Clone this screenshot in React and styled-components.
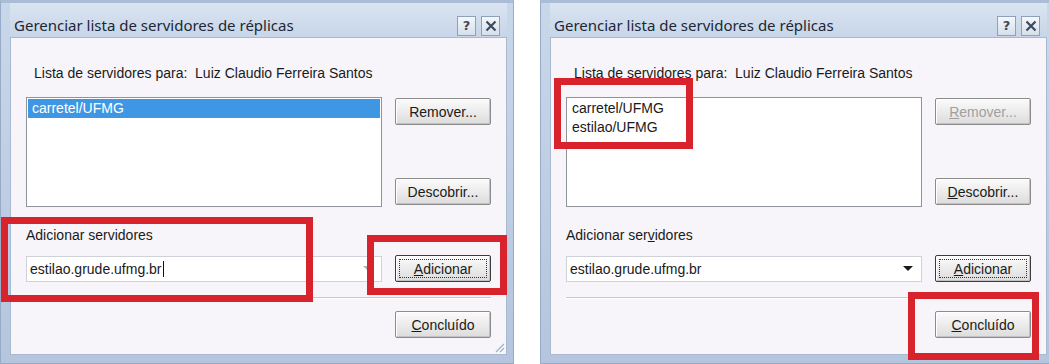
import React from "react";
import styled, { createGlobalStyle } from "styled-components";

const GlobalStyle = createGlobalStyle`
  html, body {
    margin: 0;
    padding: 0;
    background: #ffffff;
  }
`;

const dialogs = [
  {
    id: "before",
    items: ["carretel/UFMG"],
    selected: 0,
    accelerators: false,
    dimRemove: false,
    fadedArrow: true,
    caret: true,
    grip: true,
    marks: [
      { left: 0, top: 214, width: 312, height: 85 },
      { left: 366, top: 232, width: 140, height: 60 },
    ],
  },
  {
    id: "after",
    items: ["carretel/UFMG", "estilao/UFMG"],
    selected: -1,
    accelerators: true,
    dimRemove: true,
    fadedArrow: false,
    caret: false,
    grip: false,
    marks: [
      { left: 13, top: 75, width: 139, height: 71 },
      { left: 367, top: 289, width: 131, height: 68 },
    ],
  },
];

const Key = ({ on, children }) => (on ? <u>{children}</u> : children);

const Dialog = ({ d }) => (
  <Window>
    <TitleBar>
      <Title>Gerenciar lista de servidores de réplicas</Title>
      <Caption>
        <CaptionButton>?</CaptionButton>
        <CaptionButton>
          <svg width="12" height="12" viewBox="0 0 12 12">
            <path d="M1.5 1.5 L10.5 10.5 M10.5 1.5 L1.5 10.5" stroke="#3b4a5e" strokeWidth="2.2" />
          </svg>
        </CaptionButton>
      </Caption>
    </TitleBar>
    <Client>
      <Label>Lista de servidores para:&nbsp; Luiz Claudio Ferreira Santos</Label>
      <ListRow>
        <ListBox>
          {d.items.map((item, i) => (
            <ListItem key={item} $selected={i === d.selected}>
              {item}
            </ListItem>
          ))}
        </ListBox>
        <ButtonColumn>
          <Button disabled={d.dimRemove}>
            <Face>
              <Key on={d.accelerators}>R</Key>emover...
            </Face>
          </Button>
          <Button>
            <Face>
              <Key on={d.accelerators}>D</Key>escobrir...
            </Face>
          </Button>
        </ButtonColumn>
      </ListRow>
      <AddLabel>
        Adicionar ser<Key on={d.accelerators}>v</Key>idores
      </AddLabel>
      <ComboRow>
        <Combo>
          <ComboText>
            estilao.grude.ufmg.br
            {d.caret && <Caret />}
          </ComboText>
          <Arrow $faded={d.fadedArrow} />
        </Combo>
        <Button $default>
          <Face $focus>
            <u>A</u>dicionar
          </Face>
        </Button>
      </ComboRow>
      <Separator />
      <Footer>
        <Button>
          <Face>
            <u>C</u>oncluído
          </Face>
        </Button>
      </Footer>
      {d.grip && (
        <Grip width="12" height="12" viewBox="0 0 12 12">
          <path d="M11 3 L3 11 M11 7 L7 11" stroke="#9fb0c8" strokeWidth="1.2" />
          <path d="M12 4 L4 12 M12 8 L8 12" stroke="#ffffff" strokeWidth="1" />
        </Grip>
      )}
    </Client>
    {d.marks.map((m, i) => (
      <Mark key={i} style={{ left: m.left, top: m.top, width: m.width, height: m.height }} />
    ))}
  </Window>
);

export default function App() {
  return (
    <>
      <GlobalStyle />
      <Page>
        {dialogs.map((d) => (
          <Dialog key={d.id} d={d} />
        ))}
      </Page>
    </>
  );
}

const Page = styled.div`
  display: flex;
  gap: 26px;
  width: 1049px;
  height: 364px;
  overflow: hidden;
`;

const Window = styled.div`
  position: relative;
  flex: 0 0 514px;
  height: 364px;
  box-sizing: border-box;
  display: flex;
  flex-direction: column;
  padding: 0 6px 8px 9px;
  background: linear-gradient(to bottom, #c9d7ea, #b4c5dd);
  border: 1px solid #98abc6;
  border-top: 3px solid #aabcd6;
`;

const TitleBar = styled.div`
  height: 34px;
  display: flex;
  align-items: center;
  justify-content: space-between;
  padding: 0 7px 0 4px;
  background: linear-gradient(to bottom, #dbe5f1, #c6d5e8);
`;

const Title = styled.span`
  font-family: "Noto Sans", sans-serif;
  font-size: 15px;
  color: #1d2636;
  padding-top: 9px;
`;

const Caption = styled.div`
  display: flex;
  gap: 5px;
  padding-top: 11px;
`;

const CaptionButton = styled.div`
  width: 19px;
  height: 20px;
  display: flex;
  align-items: center;
  justify-content: center;
  box-sizing: border-box;
  border: 1px solid #8fa1ba;
  background: linear-gradient(to bottom, #f4f7fb, #d6dfea);
  font-family: "DejaVu Sans", sans-serif;
  font-weight: bold;
  font-size: 13px;
  color: #3b4a5e;
`;

const Client = styled.div`
  position: relative;
  flex: 1;
  display: flex;
  flex-direction: column;
  padding: 27px 0 0 15px;
  background: #f7f5f9;
  border: 1px solid #a9b9d0;
  font-family: "Liberation Sans", Arial, sans-serif;
  font-size: 14px;
  color: #1a1a1a;
`;

const Label = styled.div`
  line-height: 16px;
  padding-left: 8px;
`;

const ListRow = styled.div`
  display: flex;
  gap: 13px;
  margin-top: 16px;
`;

const ListBox = styled.div`
  width: 356px;
  height: 110px;
  box-sizing: border-box;
  padding: 1px;
  background: #ffffff;
  border: 1px solid #8e939c;
`;

const ListItem = styled.div`
  height: 19px;
  line-height: 19px;
  padding-left: 4px;
  color: ${(p) => (p.$selected ? "#ffffff" : "#1a1a1a")};
  background: ${(p) => (p.$selected ? "#3f97e4" : "transparent")};
`;

const ButtonColumn = styled.div`
  display: flex;
  flex-direction: column;
  justify-content: space-between;
  padding: 1px 0 2px;
`;

const Button = styled.button`
  width: 96px;
  height: 27px;
  box-sizing: border-box;
  display: flex;
  padding: 3px;
  border: 1px solid ${(p) => (p.$default ? "#3c3c3c" : "#8c8c8c")};
  border-radius: 2px;
  background: linear-gradient(to bottom, #fbfbfb, #ececec 50%, #dcdcdc);
  box-shadow: inset 1px 1px 0 #ffffff, inset -1px -1px 0 #c2c2c2;
  font-family: "Liberation Sans", Arial, sans-serif;
  font-size: 14px;
  color: ${(p) => (p.disabled ? "#a0a0a0" : "#1a1a1a")};
`;

const Face = styled.span`
  flex: 1;
  display: flex;
  align-items: center;
  justify-content: center;
  border: 1px dotted ${(p) => (p.$focus ? "#333333" : "transparent")};
`;

const AddLabel = styled.div`
  line-height: 16px;
  margin-top: 20px;
`;

const ComboRow = styled.div`
  display: flex;
  align-items: center;
  gap: 13px;
  margin-top: 12px;
`;

const Combo = styled.div`
  width: 356px;
  height: 26px;
  box-sizing: border-box;
  display: flex;
  align-items: center;
  justify-content: space-between;
  padding: 0 8px 0 3px;
  background: #ffffff;
  border: 1px solid #cfd2d8;
`;

const ComboText = styled.span`
  display: flex;
  align-items: center;
`;

const Caret = styled.span`
  width: 1px;
  height: 16px;
  margin-left: 1px;
  background: #111111;
`;

const Arrow = styled.span`
  width: 0;
  height: 0;
  border-left: 5px solid transparent;
  border-right: 5px solid transparent;
  border-top: 5px solid ${(p) => (p.$faded ? "#b5b5b5" : "#1a1a1a")};
`;

const Separator = styled.div`
  width: 465px;
  height: 0;
  margin-top: 15px;
  border-top: 1px solid #c8c8cc;
  border-bottom: 1px solid #ffffff;
`;

const Footer = styled.div`
  width: 465px;
  display: flex;
  justify-content: flex-end;
  margin-top: 12px;
`;

const Grip = styled.svg`
  position: absolute;
  right: 1px;
  bottom: 1px;
`;

const Mark = styled.div`
  position: absolute;
  box-sizing: border-box;
  border: 7px solid #d8232c;
  pointer-events: none;
`;
